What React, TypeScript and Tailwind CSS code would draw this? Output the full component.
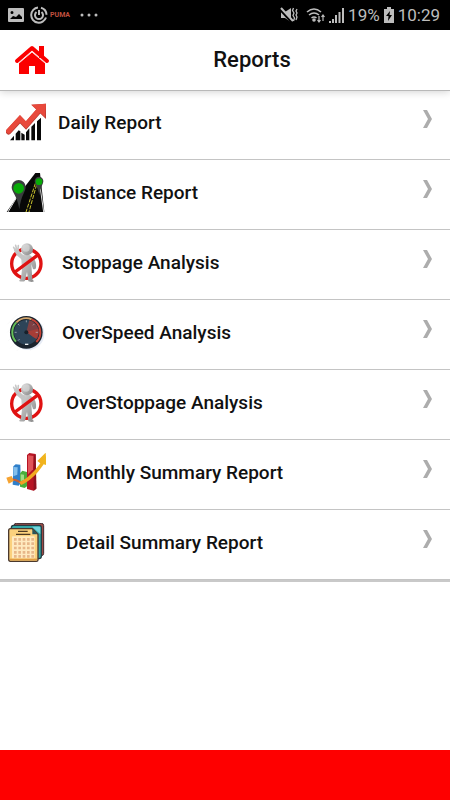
import type { ReactNode } from "react";

const ICON_BOX = "18 24 120 120";

function DailyIcon() {
  return (
    <svg viewBox={ICON_BOX} className="h-10 w-10" aria-hidden="true">
      <path
        fill="#080808"
        d="M30 136l12-14v14zM47 136v-20l9-10 5 3v27zM64 136v-23l10 6v17zM78 136v-24l10-12v36zM94 136V95l11-11v52zM111 136V79l12-11v68z"
      />
      <path
        d="M26 110L60 73l18 19 42-48"
        fill="none"
        stroke="#b83c32"
        strokeWidth="17"
        strokeLinecap="round"
      />
      <path fill="#b83c32" d="M94 29l44-3v46z" />
      <path
        d="M26 108L60 71l18 19 42-48"
        fill="none"
        stroke="#e8493c"
        strokeWidth="15"
        strokeLinecap="round"
      />
      <path fill="#e8493c" d="M94 29l44-3-3 41z" />
    </svg>
  );
}

function DistanceIcon() {
  return (
    <svg viewBox={ICON_BOX} className="h-10 w-10" aria-hidden="true">
      <path fill="#080808" d="M106 24h14l13 117H20l36-52z" />
      <path stroke="#ddd" strokeWidth="3" d="M52 94L24 141M120 64l11 77" />
      <path
        d="M111 40L78 141M114 44L87 141"
        stroke="#c9c22c"
        strokeWidth="3"
        strokeDasharray="12 4"
      />
      <path fill="#3a3d3e" d="M35 66a21 21 0 0 1 42 0c0 14-14 25-19 67-6-42-23-51-23-67z" />
      <circle cx="56" cy="70" r="16" fill="#08ab08" />
      <path fill="#3a3d3e" d="M104 48a13 13 0 0 1 26 0c0 11-9 17-12 43-4-26-14-32-14-43z" />
      <circle cx="117" cy="50" r="10" fill="#08ab08" />
    </svg>
  );
}

function StoppageIcon() {
  return (
    <svg viewBox={ICON_BOX} className="h-10 w-10" aria-hidden="true">
      <defs>
        <linearGradient id="figure" x1="0" x2="1" y1="0" y2="1">
          <stop offset="0" stopColor="#dcdcdc" />
          <stop offset="1" stopColor="#858585" />
        </linearGradient>
      </defs>
      <circle cx="79" cy="86" r="44" fill="#fff" stroke="#e01212" strokeWidth="10" />
      <path
        fill="url(#figure)"
        d="M62 63c10-8 28-6 34 3 9 4 14 20 12 32-1 6-10 7-10 1l-4-12 3 46 5 6c-5 3-14 2-17-1l-4-27-6 26c-4 4-13 3-18 1l6-8 3-27-2-28z"
      />
      <path
        d="M72 71L56 57l-7-11"
        fill="none"
        stroke="#c4c4c4"
        strokeWidth="13"
        strokeLinecap="round"
      />
      <path
        d="M41 37l5 9M47 31l3 12M55 32l-1 12"
        stroke="#c9c9c9"
        strokeWidth="5"
        strokeLinecap="round"
      />
      <circle cx="81" cy="43" r="18" fill="url(#figure)" />
      <circle cx="78" cy="39" r="11" fill="#dedede" opacity="0.6" />
      <path stroke="#e01212" strokeWidth="10" d="M45 111l67-50" />
    </svg>
  );
}

function SpeedIcon() {
  return (
    <svg viewBox={ICON_BOX} className="h-10 w-10" aria-hidden="true">
      <path
        d="M22 58l28-28M22 82l52-52M24 108l40-40M30 130l90-90M50 138l82-82M90 138l42-42"
        stroke="#eee"
        strokeWidth="1"
      />
      <circle cx="84" cy="86" r="49" fill="#e6ebf5" />
      <circle cx="79" cy="82" r="49" fill="#1b242e" />
      <circle cx="79" cy="82" r="37" fill="#2d4458" />
      <path fill="#7f3f42" d="M79 82l9-36a37 37 0 0 1 22 57z" />
      <path fill="#c23c2e" d="M80 80l35-9c2 12 0 21-7 29-6-1-13-8-28-20z" opacity="0.6" />
      <path d="M48 110a42 42 0 0 1 1-58" fill="none" stroke="#65bf5a" strokeWidth="6" />
      <path d="M49 52a42 42 0 0 1 46-9" fill="none" stroke="#d4a76d" strokeWidth="6" />
      <path d="M95 43a42 42 0 0 1 14 68" fill="none" stroke="#c84336" strokeWidth="6" />
      <path
        d="M44 82h6M54 107l5-5M54 57l4 4M79 46v6M103 57l-4 4M107 82h7"
        stroke="#b9c4ca"
        strokeWidth="2"
      />
      <circle cx="79" cy="82" r="6" fill="#17212b" />
      <path stroke="#edf0f2" strokeWidth="4" d="M75 118h10" />
    </svg>
  );
}

function MonthlyIcon() {
  return (
    <svg viewBox={ICON_BOX} className="h-10 w-10" aria-hidden="true">
      <defs>
        <linearGradient id="arrow" x1="0" x2="1">
          <stop offset="0" stopColor="#f49a26" />
          <stop offset="1" stopColor="#f0b71d" />
        </linearGradient>
      </defs>
      <path fill="#2f7fca" d="M40 64l7-6 14 1 1 56-6 7-18-3z" />
      <path fill="#84bfec" d="M41 66l12 1-1 22-12 5z" />
      <path fill="#4aae3c" d="M60 85l7-8 14 4v43l-7 5-14-4z" />
      <path fill="#a0dd86" d="M62 88l10 1v16l-10 4z" />
      <path fill="#b71424" d="M81 30l7-6 19 3 2 104-8 6-20-5z" />
      <path fill="#e05458" d="M84 31l17 2-2 40-15 15z" />
      <path fill="#8d1220" d="M101 33l6-5 2 103-8 6z" />
      <path d="M30 103l17 2 18 9" fill="none" stroke="#c66135" strokeWidth="6" />
      <path
        fill="url(#arrow)"
        d="M57 112c25-10 46-33 64-57l-9-7 25-25 3 38-9-3c-20 29-39 49-67 62z"
      />
      <path fill="#f6a331" d="M19 98l16-5 6 15-15 8z" />
    </svg>
  );
}

function DetailIcon() {
  return (
    <svg viewBox={ICON_BOX} className="h-10 w-10" aria-hidden="true">
      <rect x="42" y="25" width="89" height="97" rx="7" fill="#9c4a46" stroke="#3a2a2e" strokeWidth="3" />
      <rect x="34" y="31" width="90" height="100" rx="7" fill="#34a6a7" stroke="#243e43" strokeWidth="4" />
      <path fill="#72d4dc" d="M96 35h25v22z" />
      <path
        fill="#fbd17d"
        stroke="#4b392d"
        strokeWidth="4"
        d="M31 41h66l17 17v77q0 4-5 4H31q-5 0-5-6V47q0-6 5-6z"
      />
      <path fill="#e19c43" d="M30 131h81v5H30z" />
      <rect x="36" y="64" width="68" height="66" rx="2" fill="#ffeac0" />
      <path fill="#28545a" d="M97 42l16 16H97z" />
      <path stroke="#4d3a24" strokeWidth="4" d="M54 49h29M48 58h43" />
      <path
        d="M42 73h60M42 86h60M42 99h60M42 112h60M42 124h60"
        stroke="#e7b789"
        strokeWidth="8"
        strokeDasharray="8 5"
      />
    </svg>
  );
}

type Report = { label: string; icon: ReactNode; indent: string };

const reports: Report[] = [
  { label: "Daily Report", icon: <DailyIcon />, indent: "pl-3" },
  { label: "Distance Report", icon: <DistanceIcon />, indent: "pl-4" },
  { label: "Stoppage Analysis", icon: <StoppageIcon />, indent: "pl-4" },
  { label: "OverSpeed Analysis", icon: <SpeedIcon />, indent: "pl-4" },
  { label: "OverStoppage Analysis", icon: <StoppageIcon />, indent: "pl-5" },
  { label: "Monthly Summary Report", icon: <MonthlyIcon />, indent: "pl-5" },
  { label: "Detail Summary Report", icon: <DetailIcon />, indent: "pl-5" },
];

function StatusBar() {
  return (
    <div className="flex h-[30px] items-center justify-between bg-black pr-2.5 pl-2 text-[#bdbdbd]">
      <div className="flex items-center gap-1.5">
        <svg viewBox="0 0 16 16" className="h-4 w-4" fill="currentColor">
          <path
            fillRule="evenodd"
            d="M1 1h14q1 0 1 1v12q0 1-1 1H1q-1 0-1-1V2q0-1 1-1zm1 11h12v-2l-3-3-3 3-3-1zm2-8a1 1 0 1 0 0 3 1 1 0 0 0 0-3z"
          />
        </svg>
        <svg
          viewBox="0 0 18 18"
          className="h-[18px] w-[18px]"
          fill="none"
          stroke="currentColor"
          strokeWidth="2"
        >
          <path d="M8 1.5a7.6 7.6 0 1 0 8 10M11 1.7a7.6 7.6 0 0 1 5.5 7M6.5 6a4 4 0 1 0 5 0M9 4v5" />
        </svg>
        <span className="-ml-1 text-[7px] leading-none font-bold text-[#c0503f]">PUMA</span>
        <svg viewBox="0 0 18 4" className="ml-1 h-1 w-[18px]" fill="currentColor">
          <circle cx="2" cy="2" r="1.5" />
          <circle cx="9" cy="2" r="1.5" />
          <circle cx="16" cy="2" r="1.5" />
        </svg>
      </div>
      <div className="flex items-center gap-1">
        <svg viewBox="0 0 18 16" className="mr-1 h-4 w-[18px]" fill="currentColor">
          <path d="M1 5h4l6-4v14l-6-4H1z" />
          <path d="M0 2l12 13" stroke="#000" strokeWidth="3" />
          <path d="M1 1l12 13" stroke="currentColor" strokeWidth="2" />
          <path
            d="M13.5 1l-1 2.500 1.500 2.500-1 2.500 1.500 2.500-1 3M17 2l-1 2 1 2-1 2 1 2-1 3"
            fill="none"
            stroke="currentColor"
            strokeWidth="1.3"
          />
        </svg>
        <svg
          viewBox="0 0 19 16"
          className="h-4 w-[19px]"
          fill="none"
          stroke="currentColor"
          strokeWidth="1.6"
        >
          <path d="M1 5q7-6 14 0M3 8q5-4 10 0M5.5 11q2.500-2 5 0" />
          <circle cx="8" cy="13" r="1" fill="currentColor" />
          <path
            d="M13 9v6M11.5 13l1.500 2 1.500-2M17 14V8M15.5 10l1.500-2 1.500 2"
            strokeWidth="1.2"
          />
        </svg>
        <svg
          viewBox="0 0 15 16"
          className="h-4 w-[15px]"
          stroke="currentColor"
          strokeWidth="2"
        >
          <path d="M1 16v-2M4 16v-4M7 16V8M10.5 16V5M14 16V1" />
        </svg>
        <span className="text-[17px] leading-5">19%</span>
        <svg viewBox="0 0 10 16" className="h-4 w-2.5" fill="currentColor">
          <path d="M3 0h4v2h3v14H0V2h3z" />
          <path fill="#000" d="M6 4L2 9h2.500L4 14l4-6H5.500z" />
        </svg>
        <span className="text-[17px] leading-5">10:29</span>
      </div>
    </div>
  );
}

export default function App() {
  return (
    <div className="flex min-h-screen flex-col bg-white font-[Roboto,sans-serif] text-[#111]">
      <StatusBar />
      <header className="relative z-10 grid h-[60px] grid-cols-[54px_1fr] items-center bg-white shadow-[0_1px_0_#b8b8b8,0_2px_8px_rgba(0,0,0,0.18)]">
        <button type="button" aria-label="Home" className="pl-3.5">
          <svg viewBox="0 0 36 32" className="h-8 w-9">
            <path fill="#fb0000" d="M25 2h5v12h-5zM5 19L18 8l13 11v11H21v-8h-6v8H5z" />
            <path
              d="M3 17L18 4l15 13"
              fill="none"
              stroke="#fb0000"
              strokeWidth="4"
              strokeLinecap="round"
              strokeLinejoin="round"
            />
            <path d="M5 19L18 8l13 11" fill="none" stroke="#ffd8d8" strokeWidth="1" />
          </svg>
        </button>
        <h1 className="text-center text-[22px] leading-7 font-medium">Reports</h1>
      </header>
      <main className="flex-1">
        <ul className="border-b-2 border-[#c9c9c9]">
          {reports.map((report) => (
            <li key={report.label} className="border-b border-[#c4c4c4]">
              <a href="#" className="flex h-[69px] items-center pr-4 pb-1 pl-1.5">
                {report.icon}
                <span className={`flex-1 text-[19px] leading-6 font-medium ${report.indent}`}>
                  {report.label}
                </span>
                <svg viewBox="0 0 12 20" className="mb-2 h-5 w-3" fill="#adadad">
                  <path d="M1 1h4l5 9-5 9H1l5-9z" />
                </svg>
              </a>
            </li>
          ))}
        </ul>
      </main>
      <footer className="h-[50px] bg-[#fe0000]" />
    </div>
  );
}
